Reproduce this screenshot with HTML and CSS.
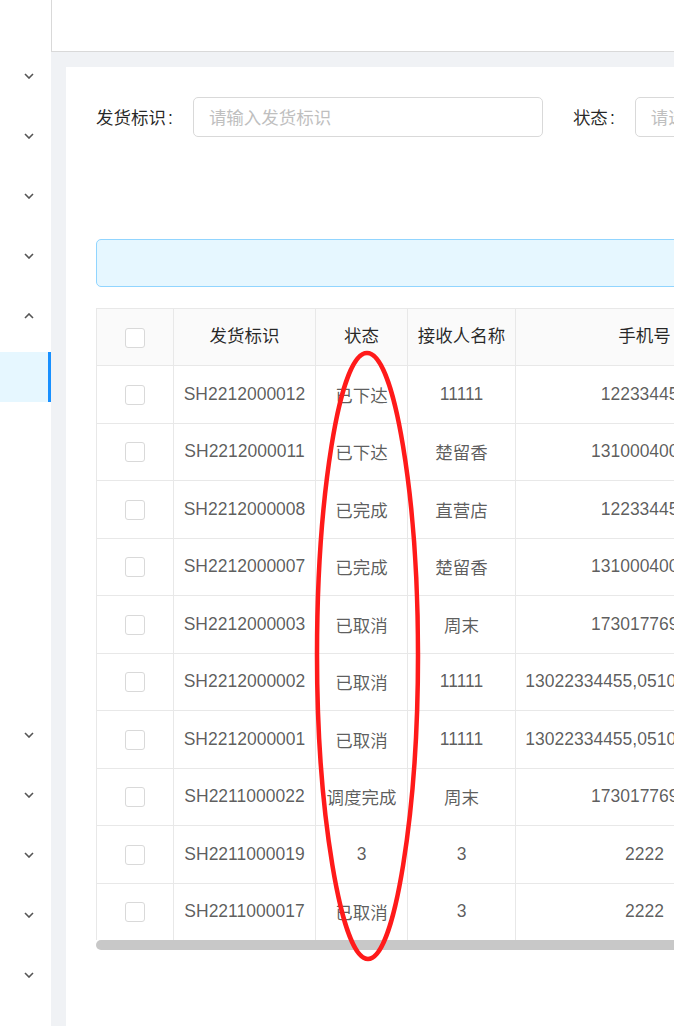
FILE: index.html
```html
<!DOCTYPE html>
<html lang="zh-CN">
<head>
<meta charset="utf-8">
<title>发货管理</title>
<link rel="stylesheet" href="styles.css">
</head>
<body>
<div class="app">
  <aside class="sidebar">
    <div class="menu-item"><svg class="chev" viewBox="0 0 10 6"><path d="M1 1 L5 5 L9 1"/></svg></div>
    <div class="menu-item"><svg class="chev" viewBox="0 0 10 6"><path d="M1 1 L5 5 L9 1"/></svg></div>
    <div class="menu-item"><svg class="chev" viewBox="0 0 10 6"><path d="M1 1 L5 5 L9 1"/></svg></div>
    <div class="menu-item"><svg class="chev" viewBox="0 0 10 6"><path d="M1 1 L5 5 L9 1"/></svg></div>
    <div class="menu-item"><svg class="chev" viewBox="0 0 10 6"><path d="M1 5 L5 1 L9 5"/></svg></div>
    <div class="submenu">
      <div class="sub-item active"></div>
    </div>
    <div class="menu-item"><svg class="chev" viewBox="0 0 10 6"><path d="M1 1 L5 5 L9 1"/></svg></div>
    <div class="menu-item"><svg class="chev" viewBox="0 0 10 6"><path d="M1 1 L5 5 L9 1"/></svg></div>
    <div class="menu-item"><svg class="chev" viewBox="0 0 10 6"><path d="M1 1 L5 5 L9 1"/></svg></div>
    <div class="menu-item"><svg class="chev" viewBox="0 0 10 6"><path d="M1 1 L5 5 L9 1"/></svg></div>
    <div class="menu-item"><svg class="chev" viewBox="0 0 10 6"><path d="M1 1 L5 5 L9 1"/></svg></div>
  </aside>
  <div class="main">
    <header class="topbar"></header>
    <div class="content">
      <div class="card">
        <div class="form-row">
          <div class="field">
            <label class="label">发货标识<span class="colon">:</span></label>
            <div class="input input-wide"><span class="ph">请输入发货标识</span></div>
          </div>
          <div class="field">
            <label class="label">状态<span class="colon">:</span></label>
            <div class="input input-wide"><span class="ph">请选择状态</span></div>
          </div>
        </div>
        <div class="alert"></div>
        <div class="table-wrap">
          <table class="grid">
            <colgroup>
              <col class="c-check"><col class="c-id"><col class="c-status"><col class="c-name"><col class="c-phone"><col class="c-more">
            </colgroup>
            <thead>
              <tr>
                <th><span class="cb"></span></th>
                <th>发货标识</th>
                <th>状态</th>
                <th>接收人名称</th>
                <th>手机号</th>
                <th>地址</th>
              </tr>
            </thead>
            <tbody>
              <tr><td><span class="cb"></span></td><td>SH2212000012</td><td>已下达</td><td>11111</td><td>122334455</td><td></td></tr>
              <tr><td><span class="cb"></span></td><td>SH2212000011</td><td>已下达</td><td>楚留香</td><td>13100040000</td><td></td></tr>
              <tr><td><span class="cb"></span></td><td>SH2212000008</td><td>已完成</td><td>直营店</td><td>122334455</td><td></td></tr>
              <tr><td><span class="cb"></span></td><td>SH2212000007</td><td>已完成</td><td>楚留香</td><td>13100040000</td><td></td></tr>
              <tr><td><span class="cb"></span></td><td>SH2212000003</td><td>已取消</td><td>周末</td><td>17301776953</td><td></td></tr>
              <tr><td><span class="cb"></span></td><td>SH2212000002</td><td>已取消</td><td>11111</td><td>13022334455,0510888888888</td><td></td></tr>
              <tr><td><span class="cb"></span></td><td>SH2212000001</td><td>已取消</td><td>11111</td><td>13022334455,0510888888888</td><td></td></tr>
              <tr><td><span class="cb"></span></td><td>SH2211000022</td><td>调度完成</td><td>周末</td><td>17301776953</td><td></td></tr>
              <tr><td><span class="cb"></span></td><td>SH2211000019</td><td>3</td><td>3</td><td>2222</td><td></td></tr>
              <tr><td><span class="cb"></span></td><td>SH2211000017</td><td>已取消</td><td>3</td><td>2222</td><td></td></tr>
            </tbody>
          </table>
          <div class="hscroll"></div>
        </div>
      </div>
    </div>
  </div>
</div>
<svg class="mark" viewBox="0 0 674 1026" width="674" height="1026">
  <path d="M367,353 C395,353 418,500 418,655 C418,810 395,959 368,959 C341,959 317,810 317,655 C317,500 339,353 367,353 Z"/>
</svg>
</body>
</html>
```
FILE: styles.css
```css
html, body {
  margin: 0;
  padding: 0;
  overflow: hidden;
  width: 674px;
  height: 1026px;
}
body {
  font-family: "Liberation Sans", "Noto Sans CJK SC", sans-serif;
  font-size: 17.5px;
  color: rgba(0, 0, 0, 0.65);
  background: #ffffff;
  position: relative;
}
.app {
  display: flex;
  width: 1100px;
  height: 1026px;
}
.sidebar {
  flex: none;
  width: 51px;
  background: #ffffff;
  padding-top: 51px;
  box-sizing: border-box;
}
.menu-item {
  height: 50px;
  margin-bottom: 10px;
  display: flex;
  align-items: center;
  justify-content: flex-end;
  padding-right: 17px;
}
.chev {
  width: 10px;
  height: 6px;
  display: block;
}
.chev path {
  fill: none;
  stroke: #555555;
  stroke-width: 1.6;
}
.submenu {
  height: 359px;
  padding-top: 1px;
  box-sizing: border-box;
}
.sub-item {
  height: 50px;
}
.sub-item.active {
  background: #e6f7ff;
  border-right: 3px solid #1890ff;
}
.main {
  flex: none;
  width: 1049px;
  display: flex;
  flex-direction: column;
  background: #f0f2f5;
}
.topbar {
  height: 51px;
  background: #ffffff;
  border-left: 1px solid #d9d9d9;
  border-bottom: 1px solid #d9d9d9;
  flex: none;
}
.content {
  flex: 1;
  padding: 15px 0 0 15px;
}
.card {
  background: #ffffff;
  height: 100%;
  padding: 30px 30px;
  box-sizing: border-box;
}
.form-row {
  display: flex;
  gap: 30px;
  height: 40px;
}
.field {
  display: flex;
  align-items: center;
}
.label {
  color: rgba(0, 0, 0, 0.85);
  margin-right: 20px;
  white-space: nowrap;
  padding-bottom: 2px;
}
.colon {
  margin-left: 2px;
}
.input {
  height: 40px;
  box-sizing: border-box;
  border: 1px solid #d9d9d9;
  border-radius: 5px;
  display: flex;
  align-items: center;
  padding-left: 15px;
  padding-bottom: 2px;
}
.input-wide {
  width: 350px;
}
.ph {
  color: #bfbfbf;
  white-space: nowrap;
}
.alert {
  margin-top: 102px;
  height: 48px;
  box-sizing: border-box;
  background: #e6f7ff;
  border: 1px solid #91d5ff;
  border-radius: 5px;
}
.table-wrap {
  margin-top: 21px;
}
.grid {
  border-collapse: collapse;
  table-layout: fixed;
  width: 857px;
}
.c-check { width: 77px; }
.c-id { width: 142px; }
.c-status { width: 92px; }
.c-name { width: 108px; }
.c-phone { width: 258px; }
.c-more { width: 180px; }
.grid th, .grid td {
  border: 1px solid #e8e8e8;
  padding: 0 4px;
  text-align: center;
  white-space: nowrap;
  overflow: visible;
}
.grid th {
  height: 57px;
  background: #fafafa;
  color: rgba(0, 0, 0, 0.85);
  font-weight: normal;
  padding-bottom: 5px;
  box-sizing: border-box;
}
.grid th:first-child {
  padding-bottom: 0;
}
.grid td {
  height: 56.5px;
  color: rgba(0, 0, 0, 0.65);
}
.grid tbody tr:last-child td {
  border-bottom: none;
}
.cb {
  display: inline-block;
  width: 20px;
  height: 20px;
  box-sizing: border-box;
  border: 1px solid #d9d9d9;
  border-radius: 3px;
  background: #ffffff;
  vertical-align: middle;
}
.hscroll {
  height: 10px;
  width: 857px;
  background: #c8c8c8;
  border-radius: 5px;
}
.mark {
  position: absolute;
  left: 0;
  top: 0;
  pointer-events: none;
}
.mark path {
  fill: none;
  stroke: #ff1a1a;
  stroke-width: 4.5;
}
```
